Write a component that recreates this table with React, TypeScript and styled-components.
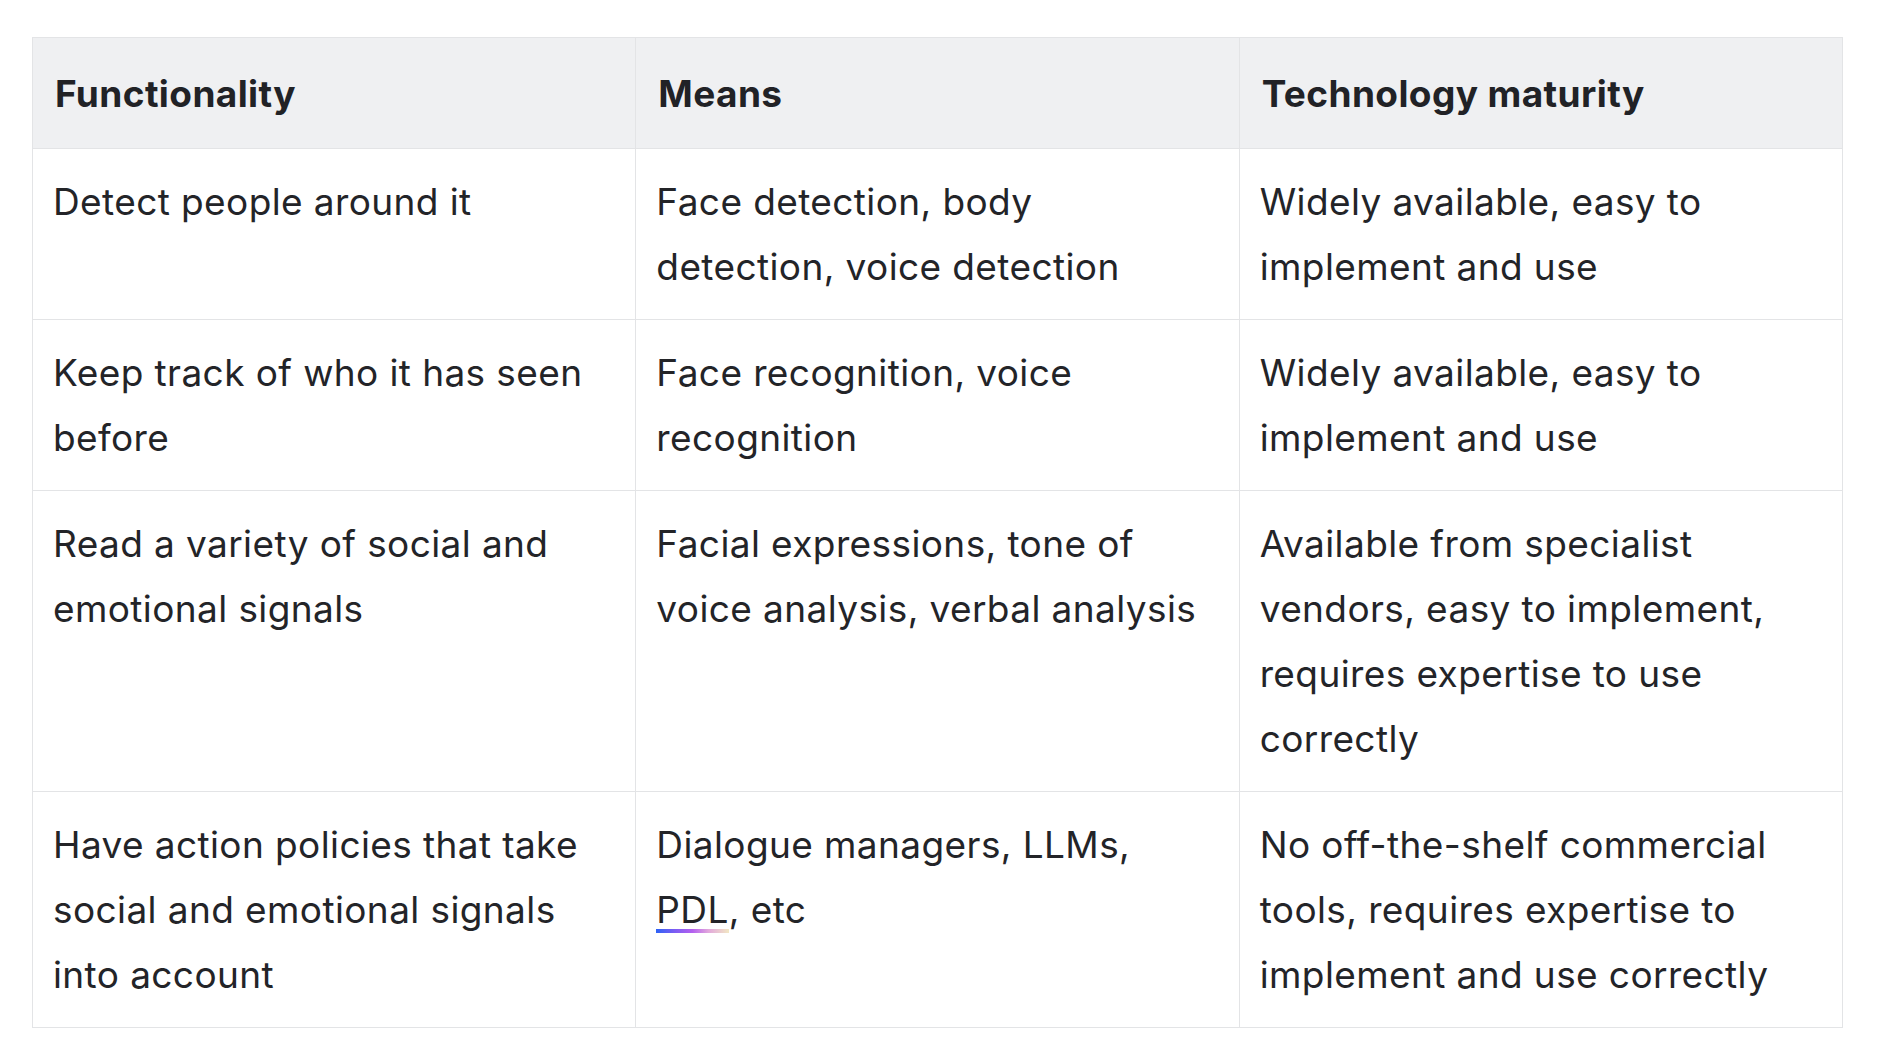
import React from "react";
import styled, { createGlobalStyle } from "styled-components";

const GlobalStyle = createGlobalStyle`
  html, body {
    margin: 0;
    padding: 0;
    background: #ffffff;
  }
  body {
    font-family: Inter, "Noto Sans", "Liberation Sans", sans-serif;
    color: #232428;
  }
`;

const Page = styled.div`
  padding: 37px 35px 36px 32px;
`;

const Table = styled.table`
  width: 100%;
  table-layout: fixed;
  border-collapse: collapse;
  font-size: 37px;
  line-height: 65px;
  letter-spacing: 0.4px;
`;

const HeadCell = styled.th`
  background: #eff0f2;
  border: 1px solid #e3e4e6;
  padding: 23px 22px 22px;
  text-align: left;
  font-weight: 700;
  letter-spacing: 0.4px;
  vertical-align: top;
  color: #212226;
`;

const Cell = styled.td`
  border: 1px solid #e3e4e6;
  padding: 20px 22px 20px 20px;
  vertical-align: top;
  font-weight: 400;
`;

const Term = styled.span`
  padding-bottom: 1px;
  background-image: linear-gradient(90deg, #2d62f5 0%, #7a5cf3 25%, #b460ef 50%, #e2a8dc 72%, #f2e8c4 100%);
  background-repeat: no-repeat;
  background-size: 100% 4px;
  background-position: 0 100%;
`;

type Row = {
  functionality: React.ReactNode;
  means: React.ReactNode;
  maturity: React.ReactNode;
};

const rows: Row[] = [
  {
    functionality: "Detect people around it",
    means: "Face detection, body detection, voice detection",
    maturity: "Widely available, easy to implement and use",
  },
  {
    functionality: "Keep track of who it has seen before",
    means: "Face recognition, voice recognition",
    maturity: "Widely available, easy to implement and use",
  },
  {
    functionality: "Read a variety of social and emotional signals",
    means: "Facial expressions, tone of voice analysis, verbal analysis",
    maturity:
      "Available from specialist vendors, easy to implement, requires expertise to use correctly",
  },
  {
    functionality: "Have action policies that take social and emotional signals into account",
    means: (
      <>
        Dialogue managers, LLMs, <Term>PDL</Term>, etc
      </>
    ),
    maturity:
      "No off-the-shelf commercial tools, requires expertise to implement and use correctly",
  },
];

function App() {
  return (
    <Page>
      <GlobalStyle />
      <Table>
        <thead>
          <tr>
            <HeadCell>Functionality</HeadCell>
            <HeadCell>Means</HeadCell>
            <HeadCell>Technology maturity</HeadCell>
          </tr>
        </thead>
        <tbody>
          {rows.map((row, i) => (
            <tr key={i}>
              <Cell>{row.functionality}</Cell>
              <Cell>{row.means}</Cell>
              <Cell>{row.maturity}</Cell>
            </tr>
          ))}
        </tbody>
      </Table>
    </Page>
  );
}

export default App;
